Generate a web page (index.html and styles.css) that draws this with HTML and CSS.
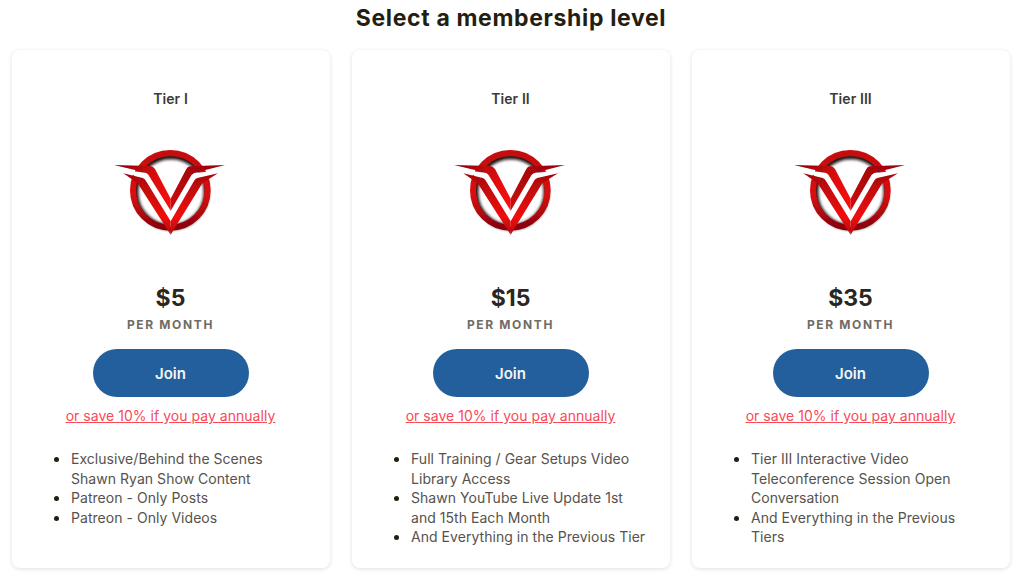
FILE: index.html
```html
<!DOCTYPE html>
<html lang="en">
<head>
<meta charset="utf-8">
<title>Select a membership level</title>
<link rel="stylesheet" href="styles.css">
</head>
<body>
<svg class="defs" width="0" height="0" aria-hidden="true">
  <defs>
    <linearGradient id="ring" x1="0" y1="0" x2="0" y2="1">
      <stop offset="0" stop-color="#c4080d"/>
      <stop offset="0.55" stop-color="#dc0a10"/>
      <stop offset="1" stop-color="#8a0508"/>
    </linearGradient>
    <linearGradient id="upperL" x1="0" y1="0" x2="1" y2="1">
      <stop offset="0" stop-color="#8c0507"/>
      <stop offset="0.5" stop-color="#dc080e"/>
      <stop offset="1" stop-color="#ff0a12"/>
    </linearGradient>
    <linearGradient id="upperR" x1="1" y1="0" x2="0" y2="1">
      <stop offset="0" stop-color="#960608"/>
      <stop offset="1" stop-color="#cc070c"/>
    </linearGradient>
    <linearGradient id="lower" x1="0" y1="0" x2="0" y2="1">
      <stop offset="0" stop-color="#a80609"/>
      <stop offset="0.7" stop-color="#f00a10"/>
      <stop offset="1" stop-color="#b40609"/>
    </linearGradient>
    <filter id="soft" x="-15%" y="-15%" width="130%" height="130%"><feGaussianBlur stdDeviation="4"/></filter>
    <filter id="tiny" x="-5%" y="-5%" width="110%" height="110%"><feGaussianBlur stdDeviation="1"/></filter>
    <symbol id="logo" viewBox="0 0 420 315">
      <circle cx="213" cy="156" r="106" fill="none" stroke="#1a1010" stroke-width="16" filter="url(#soft)"/>
      <circle cx="211" cy="151" r="112" fill="none" stroke="url(#ring)" stroke-width="18" filter="url(#tiny)"/>
      <path d="M88 92 L148 100 L212 212 L276 100 L350 92 L300 128 L212 262 L122 128 Z" fill="#fff"/>
      <g filter="url(#tiny)">
        <path d="M42 75 L150 78 Q160 79 165 87 L212 176 L212 212 L145 104 Q140 98 130 96 Z" fill="url(#upperL)"/>
        <path d="M375 75 L270 79 Q263 80 259 87 L212 176 L212 212 L274 106 Q278 100 290 97 Z" fill="url(#upperR)"/>
        <path d="M70 100 L128 114 Q134 116 138 123 L212 244 L212 284 L114 131 Q110 125 102 122 Z" fill="url(#lower)"/>
        <path d="M354 100 L292 114 Q286 116 282 123 L212 244 L212 284 L306 131 Q310 125 318 122 Z" fill="url(#lower)"/>
      </g>
    </symbol>
  </defs>
</svg>
<main class="page">
  <h1 class="title">Select a membership level</h1>
  <div class="tiers">
    <section class="card">
      <h2 class="tier-name">Tier I</h2>
      <svg class="logo" viewBox="0 0 420 315" role="img" aria-label="V logo"><use href="#logo"/></svg>
      <p class="price">$5</p>
      <p class="period">PER MONTH</p>
      <a class="join" href="#">Join</a>
      <a class="save" href="#">or save 10% if you pay annually</a>
      <ul class="perks">
        <li>Exclusive/Behind the Scenes Shawn Ryan Show Content</li>
        <li>Patreon - Only Posts</li>
        <li>Patreon - Only Videos</li>
      </ul>
    </section>
    <section class="card">
      <h2 class="tier-name">Tier II</h2>
      <svg class="logo" viewBox="0 0 420 315" role="img" aria-label="V logo"><use href="#logo"/></svg>
      <p class="price">$15</p>
      <p class="period">PER MONTH</p>
      <a class="join" href="#">Join</a>
      <a class="save" href="#">or save 10% if you pay annually</a>
      <ul class="perks">
        <li>Full Training / Gear Setups Video Library Access</li>
        <li>Shawn YouTube Live Update 1st and 15th Each Month</li>
        <li>And Everything in the Previous Tier</li>
      </ul>
    </section>
    <section class="card">
      <h2 class="tier-name">Tier III</h2>
      <svg class="logo" viewBox="0 0 420 315" role="img" aria-label="V logo"><use href="#logo"/></svg>
      <p class="price">$35</p>
      <p class="period">PER MONTH</p>
      <a class="join" href="#">Join</a>
      <a class="save" href="#">or save 10% if you pay annually</a>
      <ul class="perks">
        <li>Tier III Interactive Video Teleconference Session Open Conversation</li>
        <li>And Everything in the Previous Tiers</li>
      </ul>
    </section>
  </div>
</main>
</body>
</html>
```
FILE: styles.css
```css
* { box-sizing: border-box; }
html, body { margin: 0; height: 100%; overflow: hidden; background: #fff; }
body { font-family: Inter, "Liberation Sans", sans-serif; color: #241e12; }
.defs { position: absolute; }
.page { padding: 4px 14px 0 12px; }
.title {
  margin: 0 0 14px;
  height: 32px;
  line-height: 29px;
  font-size: 23px;
  font-weight: 700;
  letter-spacing: 0.64px;
  text-align: center;
  color: #241e12;
}
.tiers { display: grid; grid-template-columns: repeat(3, 318px); column-gap: 22px; }
.card {
  height: 518px;
  padding: 40px 21px 0 20px;
  display: flex;
  flex-direction: column;
  align-items: center;
  background: #fff;
  border-radius: 8px;
  box-shadow: 0 1px 4px rgba(36, 30, 18, 0.14);
}
.tier-name { margin: 0; font-size: 14px; line-height: 17px; font-weight: 600; letter-spacing: 0.1px; color: #3d3a36; }
.logo { display: block; width: 140px; height: 105px; margin: 33px 1px 0 0; flex: none; }
.price { margin: 40px 0 0; font-size: 23px; line-height: 26px; font-weight: 700; color: #2a2620; }
.period { margin: 6px 0 0; font-size: 12px; line-height: 15px; font-weight: 700; letter-spacing: 1.65px; color: #706c64; }
.join {
  display: flex;
  align-items: center;
  justify-content: center;
  width: 156px;
  height: 48px;
  margin-top: 17px;
  border-radius: 24px;
  background: #225f9c;
  color: #f4f4f2;
  font-size: 15px;
  font-weight: 600;
  text-decoration: none;
}
.save { margin-top: 10px; font-size: 14px; line-height: 17px; letter-spacing: 0.03px; color: #f94a57; text-decoration: underline; }
.perks { align-self: stretch; margin: 25px 0 0; padding: 0 0 0 39px; font-size: 14px; line-height: 19.5px; letter-spacing: 0.04px; color: #56524c; }
.perks li::marker { color: #241e12; font-size: 16px; }
```
